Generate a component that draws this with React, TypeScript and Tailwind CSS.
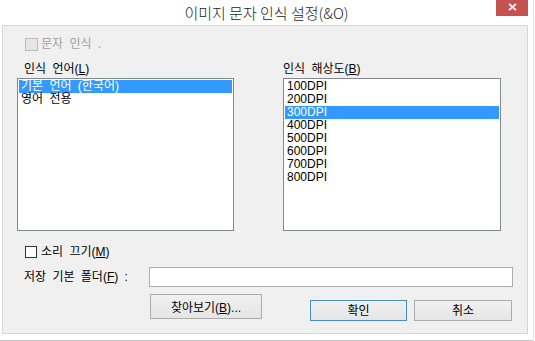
import React from 'react'

const dpiList = ['100DPI', '200DPI', '300DPI', '400DPI', '500DPI', '600DPI', '700DPI', '800DPI']
const langList = ['기본 언어 (한국어)', '영어 전용']

function ListBox({ items, selected }: { items: string[]; selected: number }) {
  return (
    <div className="mt-[2px] h-[153px] border border-[#828790] bg-white p-px">
      {items.map((item, i) => (
        <div
          key={item}
          className={
            i === selected
              ? 'h-[13px] bg-[#3399ff] pl-[2px] leading-[13px] text-white'
              : 'h-[13px] pl-[2px] leading-[13px] text-black'
          }
        >
          {item}
        </div>
      ))}
    </div>
  )
}

export default function App() {
  return (
    <div className="h-[341px] w-[534px] overflow-hidden border-r border-[#e4e4e4] bg-white font-['Liberation_Sans','Noto_Sans_CJK_KR',sans-serif] text-[12px] text-black [word-spacing:3px]">
      {/* title bar */}
      <div className="relative flex h-[25px] items-center justify-center [word-spacing:0px]">
        <span className="font-['Noto_Sans_CJK_KR',sans-serif] text-[15px] font-light leading-[15px] text-[#222]">
          이미지 문자 인식 설정(&amp;O)
        </span>
        <div className="absolute right-[5px] top-0 flex h-[16px] w-[32px] justify-center bg-[#c75050] pt-[3px]">
          <svg width="9" height="8" viewBox="0 0 9 8">
            <path d="M1 0.8 L8 7.2 M8 0.8 L1 7.2" stroke="#fff" strokeWidth="1.8" />
          </svg>
        </div>
      </div>

      {/* dialog body */}
      <div className="ml-[2px] h-[309px] w-[526px] border border-[#d6d6d6] bg-[#f0f0f0]">
        <div className="ml-[22px] mt-[11px] flex h-[14px] items-center">
          <div className="h-[13px] w-[13px] border border-[#bcbcbc] bg-[#e6e6e6]" />
          <span className="ml-[3px] leading-[14px] text-[#a0a0a0]">문자 인식 .</span>
        </div>

        <div className="ml-[14px] mt-[11px] flex gap-[49px]">
          <div className="w-[217px]">
            <div className="h-[14px] pl-[7px] leading-[14px]">
              인식 언어(<u>L</u>)
            </div>
            <ListBox items={langList} selected={0} />
          </div>
          <div className="w-[218px]">
            <div className="h-[14px] leading-[14px]">
              인식 해상도(<u>B</u>)
            </div>
            <ListBox items={dpiList} selected={2} />
          </div>
        </div>

        <div className="ml-[22px] mt-[14px] flex h-[14px] items-center">
          <div className="h-[12px] w-[12px] border border-[#333] bg-white" />
          <span className="ml-[4px] leading-[14px]">
            소리 끄기(<u>M</u>)
          </span>
        </div>

        <div className="mt-[8px] flex h-[20px] items-center">
          <span className="ml-[21px] w-[125px] leading-[14px]">
            저장 기본 폴더(<u>F</u>) :
          </span>
          <div className="h-[20px] w-[364px] border border-[#abadb3] bg-white" />
        </div>

        <div className="mt-[7px] flex items-start">
          <button className="ml-[147px] flex h-[25px] w-[112px] items-center justify-center border border-[#acacac] bg-linear-to-b from-[#f0f0f0] to-[#e5e5e5] pt-[2px] leading-[14px]">
            찾아보기(<u>B</u>)...
          </button>
          <button className="ml-[48px] mt-[6px] flex h-[21px] w-[97px] items-center justify-center border border-[#4a8ccc] bg-linear-to-b from-[#f0f0f0] to-[#e5e5e5] leading-[14px]">
            확인
          </button>
          <button className="ml-[7px] mt-[6px] flex h-[21px] w-[98px] items-center justify-center border border-[#acacac] bg-linear-to-b from-[#f0f0f0] to-[#e5e5e5] leading-[14px]">
            취소
          </button>
        </div>
      </div>

      <div className="mt-[6px] h-px bg-[#c8c8c8]" />
    </div>
  )
}
